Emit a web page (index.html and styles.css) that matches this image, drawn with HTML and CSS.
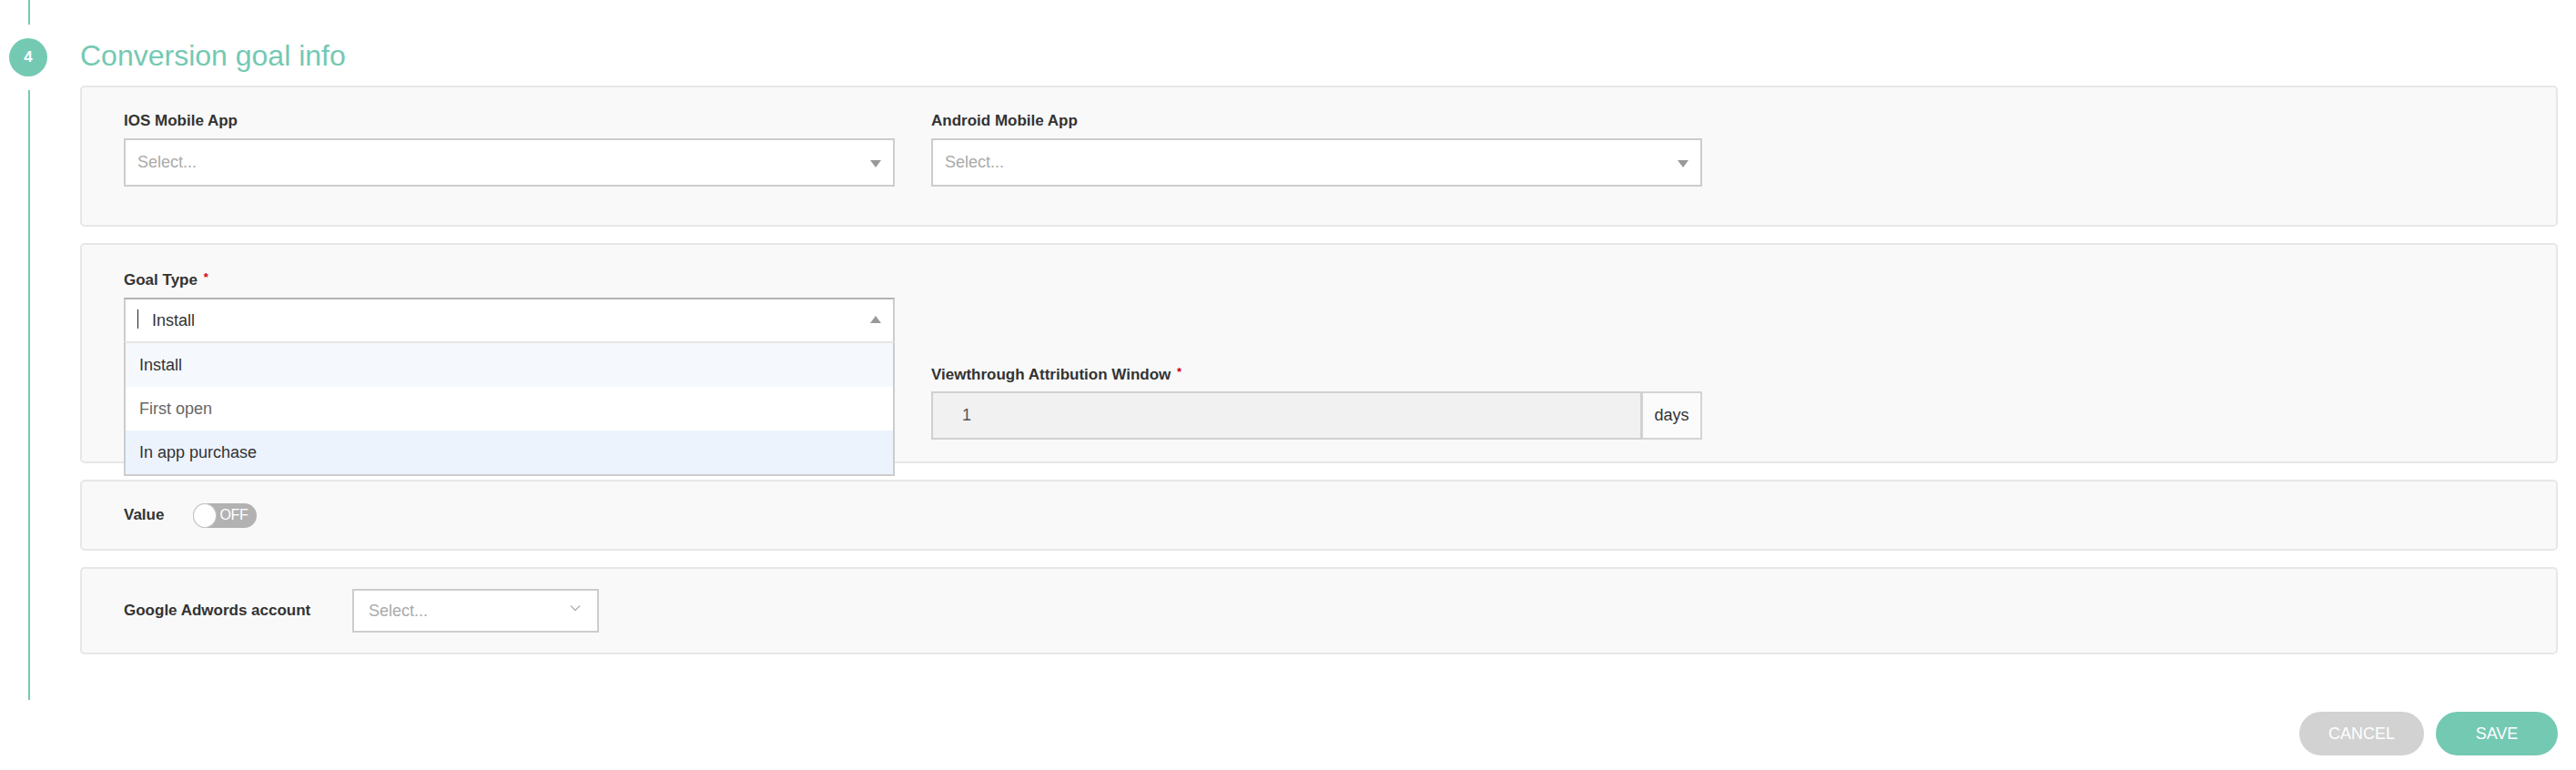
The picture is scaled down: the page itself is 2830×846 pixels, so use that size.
FILE: index.html
```html
<!DOCTYPE html>
<html lang="en">
<head>
<meta charset="utf-8">
<title>Conversion goal info</title>
<link rel="stylesheet" href="styles.css">
</head>
<body>
<div class="step">
  <div class="rail">
    <span class="rail-line rail-line--top"></span>
    <span class="step-num">4</span>
    <span class="rail-line rail-line--bottom"></span>
  </div>

  <div class="step-body">
    <h2 class="step-title">Conversion goal info</h2>

    <section class="panel panel--apps">
      <div class="field">
        <label class="field-label">IOS Mobile App</label>
        <div class="select">
          <span class="select-placeholder">Select...</span>
          <span class="select-arrow"></span>
        </div>
      </div>
      <div class="field">
        <label class="field-label">Android Mobile App</label>
        <div class="select">
          <span class="select-placeholder">Select...</span>
          <span class="select-arrow"></span>
        </div>
      </div>
    </section>

    <section class="panel panel--goal">
      <div class="field field--goal">
        <label class="field-label">Goal Type <span class="req">*</span></label>
        <div class="select select--open">
          <span class="select-caret"></span>
          <span class="select-value">Install</span>
          <span class="select-arrow select-arrow--up"></span>
          <ul class="select-menu">
            <li class="select-option is-selected">Install</li>
            <li class="select-option">First open</li>
            <li class="select-option is-focused">In app purchase</li>
          </ul>
        </div>
      </div>
      <div class="field field--window">
        <label class="field-label">Viewthrough Attribution Window <span class="req">*</span></label>
        <div class="input-group">
          <div class="input input--disabled">1</div>
          <span class="input-addon">days</span>
        </div>
      </div>
    </section>

    <section class="panel panel--inline panel--value">
      <span class="inline-label">Value</span>
      <span class="toggle">
        <span class="toggle-knob"></span>
        <span class="toggle-text">OFF</span>
      </span>
    </section>

    <section class="panel panel--inline panel--account">
      <span class="inline-label inline-label--wide">Google Adwords account</span>
      <div class="select select--small">
        <span class="select-placeholder">Select...</span>
        <svg class="select-chevron" width="12" height="8" viewBox="0 0 12 8" aria-hidden="true">
          <polyline points="1,1.5 6,6.5 11,1.5" fill="none" stroke="#b0b0b0" stroke-width="1.3"/>
        </svg>
      </div>
    </section>

    <div class="actions">
      <button class="btn btn--cancel" type="button">CANCEL</button>
      <button class="btn btn--save" type="button">SAVE</button>
    </div>
  </div>
</div>
</body>
</html>
```

FILE: styles.css
```css
* {
  box-sizing: border-box;
}

html,
body {
  margin: 0;
  padding: 0;
  background: #ffffff;
}

body {
  font-family: "Liberation Sans", Arial, Helvetica, sans-serif;
  color: #333333;
}

/* ---------- step wrapper with its timeline rail ---------- */
.step {
  display: flex;
  width: 2830px;
  padding-right: 20px;
}

.rail {
  width: 64px;
  flex: 0 0 64px;
  display: flex;
  flex-direction: column;
  align-items: center;
  padding-bottom: 61px;
}

.rail-line {
  display: block;
  width: 2px;
  background: #74c9b3;
}

.rail-line--top {
  height: 27px;
  margin-bottom: 15px;
}

.rail-line--bottom {
  flex: 1;
  margin-top: 15px;
}

.step-num {
  width: 42px;
  height: 42px;
  border-radius: 50%;
  background: #74c9b3;
  color: #ffffff;
  font-size: 17px;
  font-weight: 700;
  display: flex;
  align-items: center;
  justify-content: center;
  margin-left: -2px;
}

.step-body {
  flex: 1;
  margin-left: 24px;
  padding-top: 41px;
}

.step-title {
  margin: 0 0 13px;
  font-size: 32px;
  line-height: 40px;
  font-weight: 400;
  color: #74c9b3;
}

/* ---------- panels ---------- */
.panel {
  background: #f9f9f9;
  border: 2px solid #e7e7e7;
  border-radius: 5px;
  margin-bottom: 18px;
  padding: 0 46px;
}

.panel--apps {
  display: grid;
  grid-template-columns: 847px 847px;
  column-gap: 40px;
  padding-top: 27px;
  padding-bottom: 42px;
}

.panel--goal {
  display: grid;
  grid-template-columns: 847px 847px;
  column-gap: 40px;
  row-gap: 22px;
  padding-top: 26px;
  padding-bottom: 24px;
}

.field--goal {
  grid-column: 1;
  grid-row: 1;
  position: relative;
  z-index: 2;
}

.field--window {
  grid-column: 2;
  grid-row: 2;
}

.panel--inline {
  display: flex;
  align-items: center;
}

.panel--value {
  height: 78px;
}

.panel--account {
  height: 96px;
  margin-bottom: 0;
}

/* ---------- labels ---------- */
.field-label {
  display: block;
  font-size: 17px;
  line-height: 20px;
  font-weight: 700;
  color: #333333;
  margin-bottom: 9px;
}

.field--window .field-label {
  margin-bottom: 8px;
}

.req {
  color: #d0021b;
  font-size: 13px;
  vertical-align: 4px;
  margin-left: 2px;
}

.inline-label {
  font-size: 17px;
  font-weight: 700;
  color: #333333;
  margin-right: 32px;
}

.inline-label--wide {
  width: 251px;
  margin-right: 0;
}

/* ---------- select ---------- */
.select {
  position: relative;
  display: flex;
  align-items: center;
  height: 53px;
  background: #ffffff;
  border: 2px solid #cccccc;
  padding: 0 13px;
  font-size: 18px;
}

.select-placeholder {
  flex: 1;
  color: #aaaaaa;
}

.select-value {
  flex: 1;
  color: #333333;
}

.select-arrow {
  width: 0;
  height: 0;
  border-left: 6px solid transparent;
  border-right: 6px solid transparent;
  border-top: 8px solid #999999;
  margin-top: 3px;
}

.select-arrow--up {
  border-top: 0;
  border-bottom: 8px solid #999999;
  margin-top: -3px;
}

.select--open {
  height: 50px;
  border-color: #b3b3b3 #cccccc #d9d9d9;
}

.select-caret {
  width: 1px;
  height: 21px;
  background: #222222;
  margin-right: 15px;
  margin-top: -4px;
}

.select-menu {
  position: absolute;
  top: 46px;
  left: -2px;
  right: -2px;
  margin: 0;
  padding: 0;
  list-style: none;
  background: #ffffff;
  border: 2px solid #cccccc;
  border-top-color: #e6e6e6;
}

.select-option {
  height: 48px;
  line-height: 48px;
  padding: 0 15px;
  font-size: 18px;
  color: #666666;
  background: #ffffff;
}

.select-option.is-selected {
  color: #333333;
  background: #f5f9fe;
}

.select-option.is-focused {
  color: #333333;
  background: #ecf3fd;
}

.select--small {
  width: 271px;
  height: 48px;
  padding: 0 16px;
}

.select-chevron {
  display: block;
  margin-right: 2px;
  margin-top: -6px;
}

/* ---------- input group ---------- */
.input-group {
  display: flex;
  height: 53px;
}

.input {
  flex: 1;
  display: flex;
  align-items: center;
  border: 2px solid #d0d0d0;
  padding: 0 32px;
  font-size: 18px;
  color: #555555;
}

.input--disabled {
  background: #f1f1f1;
}

.input-addon {
  width: 66px;
  display: flex;
  align-items: center;
  justify-content: center;
  border: 2px solid #d4d4d4;
  border-left-width: 1px;
  background: #fbfbfb;
  font-size: 18px;
  color: #333333;
}

/* ---------- toggle switch ---------- */
.toggle {
  position: relative;
  display: flex;
  align-items: center;
  width: 70px;
  height: 27px;
  border-radius: 14px;
  background: #b2b2b2;
}

.toggle-knob {
  width: 26px;
  height: 27px;
  border-radius: 50%;
  background: #ffffff;
  border: 1px solid #c4c4c4;
}

.toggle-text {
  margin-left: 3px;
  font-size: 16px;
  color: #ffffff;
  letter-spacing: -0.3px;
}

/* ---------- form actions ---------- */
.actions {
  display: flex;
  justify-content: flex-end;
  gap: 13px;
  margin-top: 63px;
}

.btn {
  height: 48px;
  border: 0;
  border-radius: 24px;
  font-family: "Liberation Sans", Arial, Helvetica, sans-serif;
  font-size: 18px;
  color: #ffffff;
  cursor: pointer;
  padding: 0;
}

.btn--cancel {
  width: 137px;
  background: #d2d2d2;
}

.btn--save {
  width: 134px;
  background: #74c9b3;
}
```
